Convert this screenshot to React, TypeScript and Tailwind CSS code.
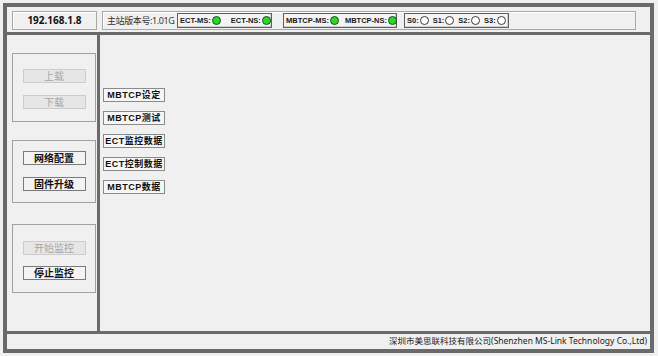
import React from "react";

const cjk = "font-['Noto_Sans','Noto_Sans_CJK_SC',sans-serif]";

function Led({ on }: { on: boolean }) {
  return (
    <span
      className={
        "inline-block h-[9px] w-[9px] shrink-0 rounded-full border border-[#3a3a3a] " +
        (on ? "bg-[#22dd22]" : "bg-white")
      }
    />
  );
}

function SubBox({ children, w, gap }: { children: React.ReactNode; w: string; gap: string }) {
  return (
    <div
      className={
        "flex h-[15px] shrink-0 items-center border border-[#5f5f5f] bg-[#f4f4f4] pl-[2px] shadow-[inset_-1px_-1px_0_#cfcfcf] " +
        w +
        " " +
        gap
      }
    >
      {children}
    </div>
  );
}

function Tag({ label, on }: { label: string; on: boolean }) {
  return (
    <span className="flex items-center gap-[1px] whitespace-nowrap font-['Liberation_Sans',sans-serif] text-[7.5px] font-bold text-[#1a1a1a]">
      {label}
      <Led on={on} />
    </span>
  );
}

function SideBtn({ label, disabled }: { label: string; disabled?: boolean }) {
  return (
    <div
      className={
        "flex h-[14px] w-[63px] items-center justify-center border text-[10px] leading-none " +
        cjk +
        (disabled
          ? " border-[#cccccc] bg-[#e6e6e6] text-[#a6a6a6]"
          : " border-[#7a7a7a] bg-[#f3f3f3] font-bold text-[#111]")
      }
    >
      {label}
    </div>
  );
}

function MainBtn({ label }: { label: string }) {
  return (
    <div className="flex h-[14px] w-[62px] items-center justify-center whitespace-nowrap border border-[#8a8a8a] bg-[#f6f6f6] font-['Liberation_Sans','Noto_Sans_CJK_SC',sans-serif] text-[9px] font-bold leading-none tracking-[0.5px] text-[#111]">
      {label}
    </div>
  );
}

export default function App() {
  return (
    <div className="h-[356px] w-[658px] bg-[#f0f0f0] pl-[3px] pt-[3px]">
      <div className="flex h-[350px] w-[651px] flex-col border-4 border-[#6a6a6a] bg-[#f0f0f0]">
        {/* top status bar */}
        <div className="flex h-[25px] items-start gap-[5px] pl-[5px] pt-[4px]">
          <div className="flex h-[19px] w-[85px] items-center justify-center border border-[#a8a8a8] bg-[#f0f0f0] font-['Noto_Sans',sans-serif] text-[10px] font-bold text-[#111] shadow-[inset_1px_1px_0_#ffffff]">
            192.168.1.8
          </div>
          <div className="flex h-[19px] w-[534px] items-center border border-[#a8a8a8] pl-[4px] shadow-[inset_1px_1px_0_#ffffff]">
            <span className={"w-[70px] shrink-0 whitespace-nowrap text-[9px] tracking-[-0.4px] text-[#333] " + cjk}>
              主站版本号:1.01G
            </span>
            <SubBox w="w-[95px]" gap="gap-[10px]">
              <Tag label="ECT-MS:" on />
              <Tag label="ECT-NS:" on />
            </SubBox>
            <span className="w-[11px] shrink-0" />
            <SubBox w="w-[114px]" gap="gap-[6px]">
              <Tag label="MBTCP-MS:" on />
              <Tag label="MBTCP-NS:" on />
            </SubBox>
            <span className="w-[7px] shrink-0" />
            <SubBox w="w-[105px]" gap="gap-[4px]">
              <Tag label="S0:" on={false} />
              <Tag label="S1:" on={false} />
              <Tag label="S2:" on={false} />
              <Tag label="S3:" on={false} />
            </SubBox>
          </div>
        </div>
        <div className="h-[3px] bg-[#6a6a6a]" />

        {/* middle */}
        <div className="flex h-[296px]">
          <div className="flex w-[93px] flex-col border-r-[3px] border-[#6a6a6a] pl-[5px] pr-[1px] pt-[18px]">
            <div className="flex h-[69px] flex-col items-center gap-[12px] border border-[#a0a0a0] pt-[15px]">
              <SideBtn label="上载" disabled />
              <SideBtn label="下载" disabled />
            </div>
            <div className="mt-[18px] flex h-[63px] flex-col items-center gap-[12px] border border-[#a0a0a0] pt-[10px]">
              <SideBtn label="网络配置" />
              <SideBtn label="固件升级" />
            </div>
            <div className="mt-[21px] flex h-[69px] flex-col items-center gap-[11px] border border-[#a0a0a0] pt-[16px]">
              <SideBtn label="开始监控" disabled />
              <SideBtn label="停止监控" />
            </div>
          </div>
          <div className="flex flex-1 flex-col gap-[9px] pl-[3px] pt-[53px]">
            <MainBtn label="MBTCP设定" />
            <MainBtn label="MBTCP测试" />
            <MainBtn label="ECT监控数据" />
            <MainBtn label="ECT控制数据" />
            <MainBtn label="MBTCP数据" />
          </div>
        </div>
        <div className="h-[3px] bg-[#6a6a6a]" />

        {/* footer */}
        <div className={"flex h-[15px] items-center justify-end whitespace-nowrap pr-[3px] text-[8.5px] text-[#222] " + cjk}>
          深圳市美思联科技有限公司(Shenzhen MS-Link Technology Co.,Ltd)
        </div>
      </div>
    </div>
  );
}
